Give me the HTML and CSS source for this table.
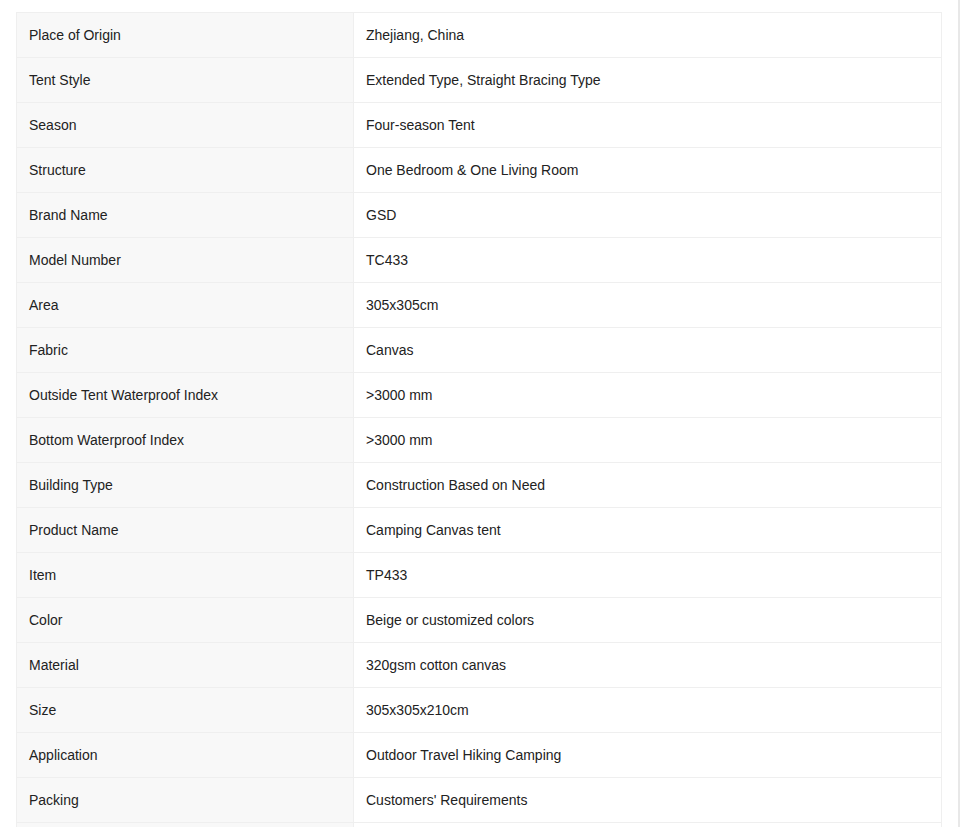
FILE: index.html
```html
<!DOCTYPE html>
<html>
<head>
<meta charset="utf-8">
<link rel="stylesheet" href="styles.css">
</head>
<body>
<div class="page">
  <table class="specs">
    <tbody>
      <tr><td class="k">Place of Origin</td><td class="v">Zhejiang, China</td></tr>
      <tr><td class="k">Tent Style</td><td class="v">Extended Type, Straight Bracing Type</td></tr>
      <tr><td class="k">Season</td><td class="v">Four-season Tent</td></tr>
      <tr><td class="k">Structure</td><td class="v">One Bedroom &amp; One Living Room</td></tr>
      <tr><td class="k">Brand Name</td><td class="v">GSD</td></tr>
      <tr><td class="k">Model Number</td><td class="v">TC433</td></tr>
      <tr><td class="k">Area</td><td class="v">305x305cm</td></tr>
      <tr><td class="k">Fabric</td><td class="v">Canvas</td></tr>
      <tr><td class="k">Outside Tent Waterproof Index</td><td class="v">&gt;3000 mm</td></tr>
      <tr><td class="k">Bottom Waterproof Index</td><td class="v">&gt;3000 mm</td></tr>
      <tr><td class="k">Building Type</td><td class="v">Construction Based on Need</td></tr>
      <tr><td class="k">Product Name</td><td class="v">Camping Canvas tent</td></tr>
      <tr><td class="k">Item</td><td class="v">TP433</td></tr>
      <tr><td class="k">Color</td><td class="v">Beige or customized colors</td></tr>
      <tr><td class="k">Material</td><td class="v">320gsm cotton canvas</td></tr>
      <tr><td class="k">Size</td><td class="v">305x305x210cm</td></tr>
      <tr><td class="k">Application</td><td class="v">Outdoor Travel Hiking Camping</td></tr>
      <tr><td class="k">Packing</td><td class="v">Customers' Requirements</td></tr>
      <tr><td class="k"></td><td class="v"></td></tr>
    </tbody>
  </table>
</div>
</body>
</html>
```

FILE: styles.css
```css
html, body {
  margin: 0;
  padding: 0;
  background: #ffffff;
}
.page {
  box-sizing: content-box;
  width: 926px;
  padding: 12px 16px 0 16px;
  border-right: 2px solid #e8e8e8;
  min-height: 900px;
}
.specs {
  width: 926px;
  border-collapse: collapse;
  font-family: "Liberation Sans", Arial, sans-serif;
  font-size: 14px;
  color: #222222;
}
.specs td {
  height: 45px;
  padding: 0 12px;
  border: 1px solid #efefef;
  vertical-align: middle;
  box-sizing: border-box;
}
.specs td.k {
  width: 337px;
  background: #f8f8f8;
}
.specs td.v {
  background: #ffffff;
}
```
